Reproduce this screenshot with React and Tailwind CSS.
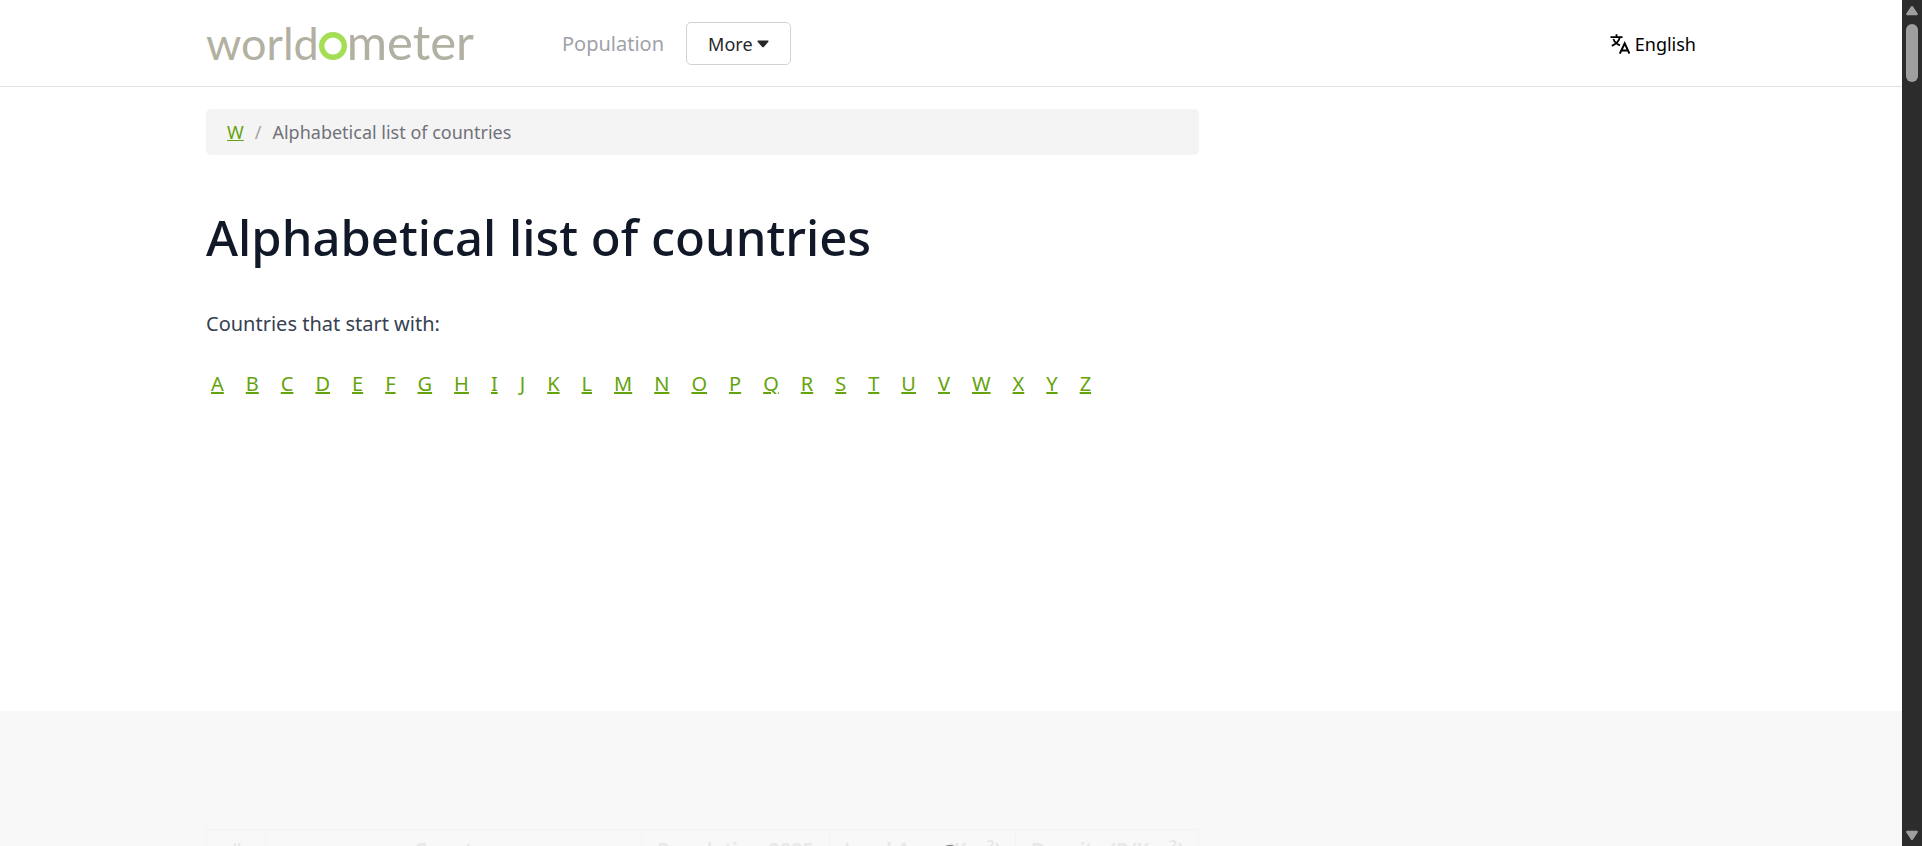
import React from "react";

const letters = "ABCDEFGHIJKLMNOPQRSTUVWXYZ".split("");

function Logo() {
  return (
    <a
      href="#home"
      aria-label="worldometer"
      className="flex w-[270px] items-baseline pb-1 font-['Lato',sans-serif] text-[49px] leading-[56px] text-[#b2b0a2]"
    >
      <span className="text-[45px]">world</span>
      <svg viewBox="0 0 28 28" className="size-7 shrink-0" aria-hidden="true">
        <circle cx="14" cy="14" r="11.3" fill="none" stroke="#a5de54" strokeWidth="5.4" />
      </svg>
      <span>meter</span>
    </a>
  );
}

function TranslateIcon() {
  return (
    <svg viewBox="0 0 20 20" className="size-5" fill="none" stroke="currentColor" strokeWidth="1.8" aria-hidden="true">
      <path d="M0.5 3.2H12.5M6.5 0.3V3M9.8 3.4C8.8 7 6 10 1.8 11.8M3.4 5C4.5 8 6.8 10.2 10 11.4" />
      <path d="M9.8 19.6L14.7 9.4L19.4 19.6M11.4 16.4H17.9" strokeWidth="2" />
    </svg>
  );
}

function Header() {
  return (
    <header className="border-b border-[#e1e1e3]">
      <div className="mx-auto flex h-[86px] max-w-[1490px] items-center pt-px">
        <Logo />
        <nav className="ml-[86px] flex items-center gap-[22px]">
          <a href="#population" className="text-xl text-[#a1a1aa]">Population</a>
          <button
            type="button"
            className="flex h-[43px] items-center gap-1 rounded-[5px] border border-[#d1d1d6] px-[21px] text-lg text-[#27272a]"
          >
            More
            <svg viewBox="0 0 12 8" className="h-2 w-3" aria-hidden="true">
              <path d="M1 0.5H11Q12 1 11.2 2L7 6.7Q6 7.7 5 6.7L0.8 2Q0 1 1 0.5Z" fill="currentColor" />
            </svg>
          </button>
        </nav>
        <button type="button" className="ml-auto flex items-center gap-[5px] text-lg text-black">
          <TranslateIcon />
          English
        </button>
      </div>
    </header>
  );
}

function Main() {
  return (
    <main className="mx-auto w-full max-w-[1490px]">
      <div className="w-2/3">
        <nav aria-label="Breadcrumb" className="mt-[22px] flex h-[46px] items-center rounded-[5px] bg-[#f4f4f4] px-[21px] text-lg text-[#71717a]">
          <a href="#home" className="text-[#65a30d] underline">W</a>
          <span className="px-[11px] text-[#a1a1aa]">/</span>
          <span>Alphabetical list of countries</span>
        </nav>
        <h1 className="mt-[54px] text-[49px] leading-[56px] font-medium text-[#111827]">
          Alphabetical list of countries
        </h1>
        <p className="mt-[42px] text-xl leading-[34px] text-[#374151]">Countries that start with:</p>
        <ul className="mt-[26px] flex flex-wrap gap-3 text-xl leading-[34px]">
          {letters.map((letter) => (
            <li key={letter} className="px-[5px]">
              <a href={"#" + letter} className="text-[#65a30d] underline">{letter}</a>
            </li>
          ))}
        </ul>
      </div>
    </main>
  );
}

function CountryTable() {
  const cell = "border border-[#f3f3f4] pt-1.5 font-semibold whitespace-nowrap";
  return (
    <section className="mt-[310px] shrink-0 bg-[#f8f8f8] pt-[118px]">
      <div className="mx-auto max-w-[1490px]">
        <div className="relative w-2/3">
          <table className="w-full table-fixed border-collapse text-xl text-[#e7e7e9]">
            <colgroup>
              <col className="w-[59px]" />
              <col className="w-[376px]" />
              <col className="w-[188px]" />
              <col className="w-[186px]" />
              <col />
            </colgroup>
            <thead>
              <tr>
                <th className={cell}>#</th>
                <th className={cell}>Country</th>
                <th className={cell}>Population 2025</th>
                <th className={cell}>Land Area (Km<sup>2</sup>)</th>
                <th className={cell}>Density (P/Km<sup>2</sup>)</th>
              </tr>
            </thead>
          </table>
          <span className="absolute top-4 left-[732px] size-6 rounded-full border-2 border-[#777777]" />
        </div>
      </div>
    </section>
  );
}

function Scrollbar() {
  return (
    <div aria-hidden="true" className="flex w-5 shrink-0 flex-col items-center bg-[#2c2c2c] pt-1 pb-[5px]">
      <svg viewBox="0 0 12 12" className="size-3" fill="#9f9f9f">
        <path d="M4.8 2.8Q6 1 7.2 2.8L11.6 9.6Q12.2 11.3 10.8 11.3H1.2Q-0.2 11.3 0.4 9.6Z" />
      </svg>
      <div className="mt-2 h-[58px] w-3 rounded-full bg-[#9f9f9f]" />
      <svg viewBox="0 0 12 12" className="mt-auto size-3" fill="#9f9f9f">
        <path d="M4.8 10.2Q6 12 7.2 10.2L11.6 3.4Q12.2 1.7 10.8 1.7H1.2Q-0.2 1.7 0.4 3.4Z" />
      </svg>
    </div>
  );
}

export default function App() {
  return (
    <div className="flex h-screen overflow-hidden bg-white font-['Noto_Sans',sans-serif]">
      <div className="flex min-w-0 flex-1 flex-col overflow-hidden">
        <Header />
        <Main />
        <CountryTable />
      </div>
      <Scrollbar />
    </div>
  );
}
